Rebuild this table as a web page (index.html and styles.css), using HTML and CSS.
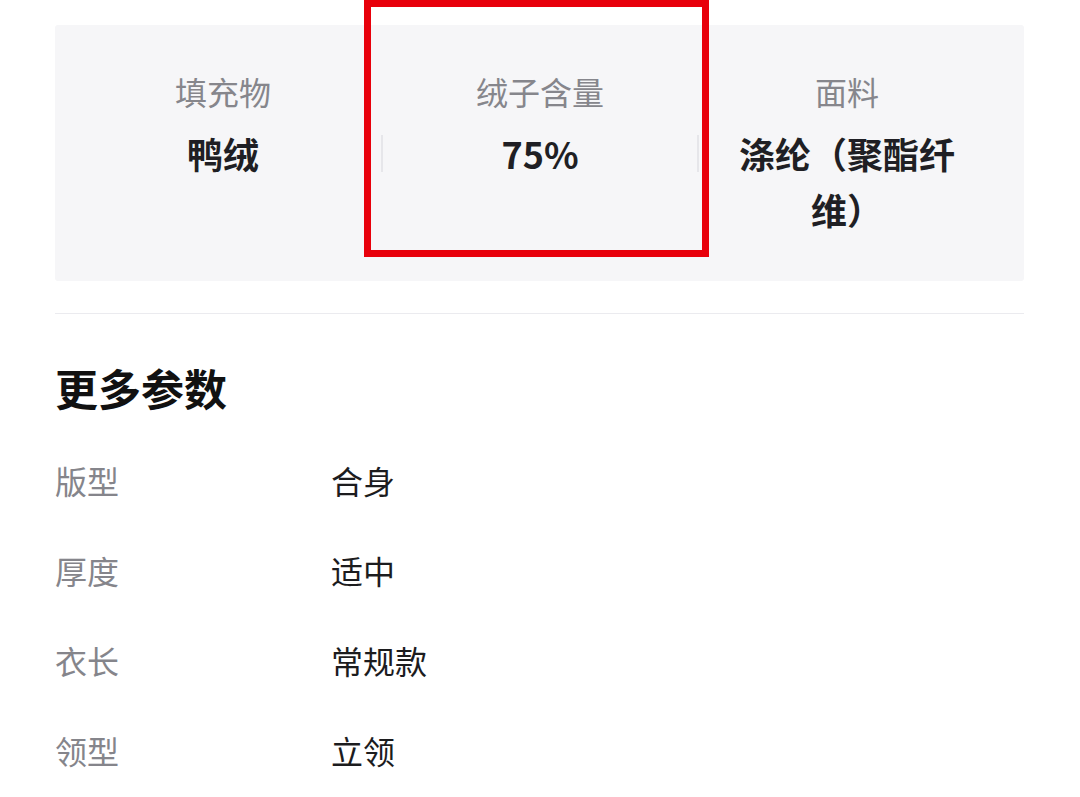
FILE: index.html
```html
<!DOCTYPE html>
<html lang="zh-CN">
<head>
    <meta charset="UTF-8">
    <meta name="viewport" content="width=device-width, initial-scale=1.0">
    <title>商品参数</title>
    <link rel="stylesheet" href="styles.css">
</head>
<body>

    <div class="page">
        <div class="specs">
            <div class="spec spec-first">
                <p class="spec-label">填充物</p>
                <p class="spec-value">鸭绒</p>
            </div>
            <div class="divider"></div>
            <div class="spec">
                <p class="spec-label">绒子含量</p>
                <p class="spec-value">75%</p>
            </div>
            <div class="divider"></div>
            <div class="spec spec-last">
                <p class="spec-label">面料</p>
                <p class="spec-value">涤纶（聚酯纤维）</p>
            </div>
        </div>

        <div class="rule"></div>

        <h2 class="title">更多参数</h2>

        <div class="params">
            <div class="param-row">
                <span class="param-name">版型</span>
                <span class="param-value">合身</span>
            </div>
            <div class="param-row">
                <span class="param-name">厚度</span>
                <span class="param-value">适中</span>
            </div>
            <div class="param-row">
                <span class="param-name">衣长</span>
                <span class="param-value">常规款</span>
            </div>
            <div class="param-row">
                <span class="param-name">领型</span>
                <span class="param-value">立领</span>
            </div>
        </div>
    </div>

    <!-- 标注框 -->
    <div class="highlight"></div>

</body>
</html>
```

FILE: styles.css
```css
body {
    margin: 0;
    background: #fff;
    font-family: "Noto Sans CJK SC", "Noto Sans", sans-serif;
    color: #1c1c1f;
}
.page {
    padding: 25px 56px 0 55px;
}
.specs {
    display: grid;
    grid-template-columns: 326px 2px 314px 2px 325px;
    height: 256px;
    background: #f6f6f8;
    border-radius: 3px;
}
.spec {
    padding: 44px 0 0;
    text-align: center;
}
.spec-first {
    padding-left: 10px;
}
.spec-last {
    padding-left: 28px;
    padding-right: 57px;
}
.spec-label {
    margin: 0;
    font-size: 32px;
    line-height: 44px;
    color: #86868c;
}
.spec-value {
    margin: 12px 0 0;
    font-size: 36px;
    line-height: 56px;
    font-weight: bold;
    color: #1f1f24;
}
.divider {
    margin-top: 110px;
    height: 37px;
    background: #e6e6ea;
}
.rule {
    height: 1px;
    margin-top: 32px;
    background: #ebebef;
}
.title {
    margin: 45px 0 0;
    font-size: 43px;
    line-height: 56px;
    font-weight: bold;
    color: #111;
}
.params {
    margin-top: 20px;
}
.param-row {
    display: grid;
    grid-template-columns: 276px 1fr;
    height: 90px;
    align-items: center;
    font-size: 32px;
}
.param-name {
    color: #85858b;
}
.param-value {
    color: #1c1c1e;
}
.highlight {
    position: absolute;
    left: 364px;
    top: 0;
    width: 331px;
    height: 243px;
    border: 7px solid #e8000b;
}
```
